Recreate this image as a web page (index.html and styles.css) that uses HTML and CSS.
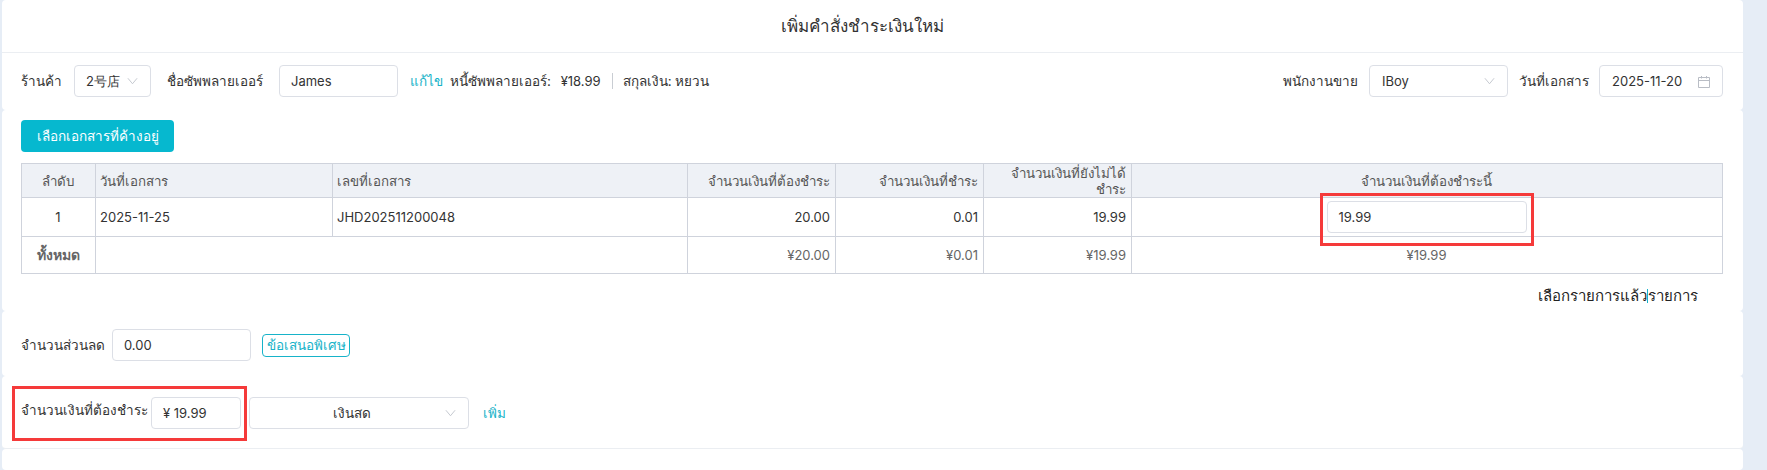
FILE: index.html
```html
<!DOCTYPE html>
<html lang="th">
<head>
  <meta charset="UTF-8" />
  <meta name="viewport" content="width=device-width, initial-scale=1.0" />
  <title>เพิ่มคำสั่งชำระเงินใหม่</title>
  <link rel="stylesheet" href="styles.css">
</head>
<body>
  <div class="page">
    <div class="section head-section">
      <h1 class="page-title">เพิ่มคำสั่งชำระเงินใหม่</h1>
      <div class="top-form">
        <div class="form-left">
          <span class="label">ร้านค้า</span>
          <div class="field shop-select">2号店
            <svg class="chevron" viewBox="0 0 12 8"><path d="M1 1l5 6 5-6" /></svg>
          </div>
          <span class="label supplier-label">ชื่อซัพพลายเออร์</span>
          <div class="field supplier-input">James</div>
          <a class="link edit-link">แก้ไข</a>
          <span class="label info">หนี้ซัพพลายเออร์: <span class="num">¥18.99</span></span>
          <span class="divider"></span>
          <span class="label info">สกุลเงิน: หยวน</span>
        </div>
        <div class="form-right">
          <span class="label">พนักงานขาย</span>
          <div class="field seller-select">IBoy
            <svg class="chevron" viewBox="0 0 12 8"><path d="M1 1l5 6 5-6" /></svg>
          </div>
          <span class="label">วันที่เอกสาร</span>
          <div class="field date-input">2025-11-20
            <svg class="calendar" viewBox="0 0 14 14"><path d="M1.5 2.5h11v10h-11zM1.5 5.5h11M4.5 1v2.5M9.5 1v2.5" /></svg>
          </div>
        </div>
      </div>
    </div>

    <div class="section table-section">
      <button class="primary-btn">เลือกเอกสารที่ค้างอยู่</button>
      <table class="doc-table">
        <colgroup>
          <col class="col-no"><col class="col-date"><col class="col-code">
          <col class="col-amt"><col class="col-amt"><col class="col-amt"><col>
        </colgroup>
        <thead>
          <tr>
            <th class="center">ลำดับ</th>
            <th>วันที่เอกสาร</th>
            <th>เลขที่เอกสาร</th>
            <th class="right">จำนวนเงินที่ต้องชำระ</th>
            <th class="right">จำนวนเงินที่ชำระ</th>
            <th class="right narrow-head">จำนวนเงินที่ยังไม่ได้ชำระ</th>
            <th class="center">จำนวนเงินที่ต้องชำระนี้</th>
          </tr>
        </thead>
        <tbody>
          <tr class="data-row">
            <td class="center">1</td>
            <td>2025-11-25</td>
            <td>JHD202511200048</td>
            <td class="right">20.00</td>
            <td class="right">0.01</td>
            <td class="right">19.99</td>
            <td class="center">
              <div class="mark-wrap">
                <div class="field pay-input">19.99</div>
                <span class="red-mark cell-mark"></span>
              </div>
            </td>
          </tr>
          <tr class="total-row">
            <td class="center total-label">ทั้งหมด</td>
            <td colspan="2"></td>
            <td class="right">¥20.00</td>
            <td class="right">¥0.01</td>
            <td class="right">¥19.99</td>
            <td class="center">¥19.99</td>
          </tr>
        </tbody>
      </table>
      <div class="selected-line">เลือกรายการแล้ว<span class="count-bar"></span>รายการ</div>
    </div>

    <div class="section discount-section">
      <span class="label">จำนวนส่วนลด</span>
      <div class="field discount-input">0.00</div>
      <span class="offer-btn">ข้อเสนอพิเศษ</span>
    </div>

    <div class="section pay-section">
      <div class="pay-row">
        <span class="red-mark pay-mark"></span>
        <span class="label pay-label">จำนวนเงินที่ต้องชำระ</span>
        <div class="field amount-input">¥ 19.99</div>
        <div class="field method-select"><span class="method-text">เงินสด</span>
          <svg class="chevron" viewBox="0 0 12 8"><path d="M1 1l5 6 5-6" /></svg>
        </div>
        <a class="link add-link">เพิ่ม</a>
      </div>
    </div>
    <div class="section foot-section"></div>
  </div>
</body>
</html>
```

FILE: styles.css
```css
html, body {
  margin: 0;
  height: 100%;
  overflow: hidden;
}
body {
  background: #e6edf6;
  font-family: 'Inter', 'Noto Sans', sans-serif;
  font-size: 13px;
  color: #333;
}
.page {
  width: 1741px;
  margin-left: 2px;
  height: 470px;
  display: flex;
  flex-direction: column;
}
.section {
  background: #fff;
  border-radius: 4px;
}
.head-section {
  height: 110px;
}
.page-title {
  margin: 0;
  height: 52px;
  line-height: 52px;
  padding-right: 20px;
  font-size: 17px;
  font-weight: 500;
  text-align: center;
  border-bottom: 1px solid #ebeef2;
  box-sizing: content-box;
}
.top-form {
  display: flex;
  justify-content: space-between;
  align-items: center;
  padding: 12px 20px 0 19px;
}
.form-left, .form-right {
  display: flex;
  align-items: center;
}
.label, .link, .method-text {
  font-size: 13.5px;
}
.num {
  font-size: 13px;
  margin-left: 6px;
}
.field {
  box-sizing: border-box;
  height: 32px;
  line-height: 30px;
  border: 1px solid #dcdfe6;
  border-radius: 4px;
  background: #fff;
  padding: 0 11px;
  position: relative;
}
.chevron {
  position: absolute;
  right: 12px;
  top: 11px;
  width: 11px;
  height: 8px;
  fill: none;
  stroke: #c0c4cc;
  stroke-width: 1;
}
.calendar {
  position: absolute;
  right: 11px;
  top: 9px;
  width: 14px;
  height: 14px;
  fill: none;
  stroke: #b9bdc5;
  stroke-width: 1;
}
.shop-select { width: 77px; margin-left: 12px; }
.supplier-label { margin-left: 16px; }
.supplier-input { width: 119px; margin-left: 16px; }
.link { color: #17b3c9; }
.edit-link { margin-left: 12px; }
.info { margin-left: 7px; }
.divider {
  width: 1px;
  height: 16px;
  background: #c9cdd3;
  margin-left: 11px;
}
.divider + .info { margin-left: 10px; }
.seller-select { width: 139px; margin: 0 11px; padding-left: 12px; }
.date-input { width: 124px; margin-left: 10px; padding-left: 12px; }

.table-section {
  height: 201px;
  padding: 10px 20px 0 19px;
  box-sizing: border-box;
}
.primary-btn {
  display: block;
  width: 153px;
  height: 32px;
  border: none;
  border-radius: 4px;
  background: #06b8cf;
  color: #fff;
  font: inherit;
  font-size: 13.5px;
  font-weight: 500;
  padding: 0;
}
.doc-table {
  width: 1702px;
  margin-top: 11px;
  border-collapse: collapse;
  table-layout: fixed;
}
.col-no { width: 74px; }
.col-date { width: 237px; }
.col-code { width: 355px; }
.col-amt { width: 148px; }
.doc-table th, .doc-table td {
  border: 1px solid #cfd3dc;
  padding: 0 5px 0 4px;
  text-align: left;
}
.doc-table th {
  background: #eef1f6;
  height: 33px;
  font-size: 13.3px;
  font-weight: 500;
  color: #555;
  line-height: 16px;
}
.doc-table th.narrow-head { padding-left: 22px; }
.doc-table th.right, .doc-table td.right { text-align: right; }
.doc-table th.center, .doc-table td.center { text-align: center; }
.data-row td { height: 38px; }
.total-row td { height: 36px; color: #666; }
.total-row .total-label { font-size: 14px; font-weight: 600; }
.mark-wrap {
  position: relative;
  width: 200px;
  margin: 0 auto;
}
.pay-input {
  text-align: left;
}
.red-mark {
  position: absolute;
  border: 3px solid #f53a3a;
  box-sizing: border-box;
}
.cell-mark {
  left: -7px;
  top: -8px;
  width: 214px;
  height: 53px;
}
.selected-line {
  text-align: right;
  margin: 10px 5px 0 0;
  padding-right: 20px;
  font-size: 15px;
  color: #222;
}
.count-bar {
  display: inline-block;
  width: 1px;
  height: 14px;
  background: #17b3c9;
  vertical-align: -2px;
}

.discount-section {
  height: 65px;
  display: flex;
  align-items: center;
  padding: 6px 19px 3px;
  box-sizing: border-box;
}
.discount-input { width: 139px; margin-left: 7px; }
.offer-btn {
  margin-left: 11px;
  box-sizing: border-box;
  width: 88px;
  height: 23px;
  line-height: 21px;
  border: 1px solid #17b3c9;
  border-radius: 4px;
  color: #17b3c9;
  font-size: 13.5px;
  text-align: center;
  white-space: nowrap;
}

.pay-section {
  height: 73px;
  box-sizing: border-box;
  border-bottom: 1px solid #ebeef2;
  padding: 21px 0 0 19px;
}
.pay-row {
  position: relative;
  display: flex;
  align-items: center;
}
.pay-label { margin-right: 3px; position: relative; top: -3px; }
.amount-input { width: 90px; }
.method-select { width: 220px; margin-left: 8px; text-align: center; padding-right: 26px; }
.add-link { margin-left: 14px; }
.pay-mark {
  left: -9px;
  top: -11px;
  width: 235px;
  height: 55px;
}
.foot-section { flex: 1; }
```
